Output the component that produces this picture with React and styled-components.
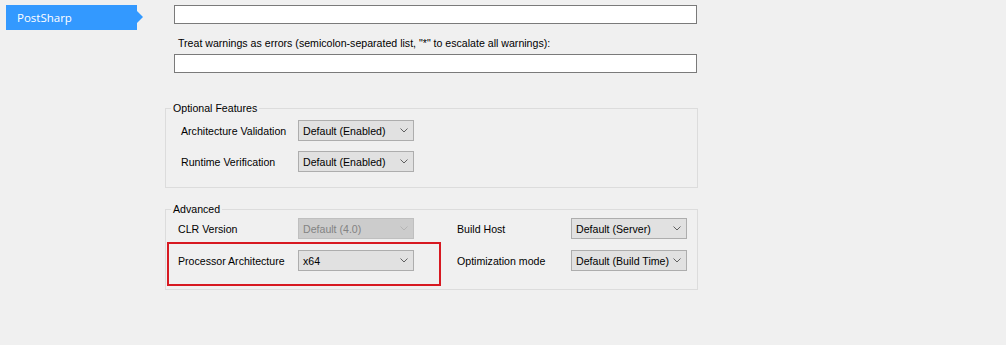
import styled, { createGlobalStyle } from 'styled-components';

const GlobalStyle = createGlobalStyle`
  body {
    margin: 0;
    background: #f0f0f0;
    font-family: "Liberation Sans", Arial, sans-serif;
    font-size: 10.6px;
    color: #000;
  }
`;

const Page = styled.div`
  display: flex;
  width: 1006px;
  height: 345px;
  overflow: hidden;
  background: #f0f0f0;
`;

const Sidebar = styled.div`
  flex-shrink: 0;
  width: 165px;
  box-sizing: border-box;
  padding: 5px 0 0 6px;
`;

const Tab = styled.div`
  position: relative;
  width: 131px;
  height: 25px;
  box-sizing: border-box;
  padding-left: 11px;
  background: #3399ff;
  color: #fff;
  font-family: "Open Sans", "Noto Sans", sans-serif;
  font-size: 11.5px;
  line-height: 25px;

  &::after {
    content: '';
    position: absolute;
    left: 100%;
    top: 6px;
    border-left: 6px solid #3399ff;
    border-top: 6px solid transparent;
    border-bottom: 6px solid transparent;
  }
`;

const Main = styled.div`
  display: flex;
  flex-direction: column;
  width: 533px;
  margin-top: -12px;
`;

const Field = styled.div`
  display: flex;
  flex-direction: column;
  margin-top: ${props => props.$gap || 0}px;

  .label {
    padding-left: 13px;
    line-height: 13px;
    margin-bottom: 4px;
    white-space: nowrap;
  }
`;

const TextBox = styled.div`
  margin-left: 9px;
  width: 523px;
  height: 19px;
  box-sizing: border-box;
  border: 1px solid #7a7a7a;
  background: #fff;
`;

const GroupBox = styled.fieldset`
  margin: ${props => props.$gap}px 0 0;
  width: 533px;
  box-sizing: border-box;
  border: 1px solid #dcdcdc;
  padding: 0;
  min-width: 0;

  legend {
    margin-left: 5px;
    padding: 0 2px;
    line-height: 13px;
  }
`;

const Rows = styled.div`
  display: flex;
  flex-direction: column;
  gap: 10px;
  padding: 5px 0 15px 15px;
`;

const Grid = styled.div`
  display: grid;
  grid-template-columns: 236px 230px;
  column-gap: 43px;
  row-gap: 11px;
  padding: 2px 0 18px 12px;
`;

const Row = styled.div`
  display: grid;
  grid-template-columns: ${props => props.$labelWidth}px 116px;
  align-items: center;
  height: 21px;
  white-space: nowrap;
`;

const Highlight = styled.div`
  margin: -8px -27px -15px -11px;
  padding: 6px 25px 13px 9px;
  border: 2px solid #d71921;
`;

const Combo = styled.div`
  display: flex;
  align-items: center;
  justify-content: space-between;
  height: 21px;
  box-sizing: border-box;
  padding: 0 5px 0 4px;
  border: 1px solid ${props => (props.$disabled ? '#bfbfbf' : '#adadad')};
  background: ${props => (props.$disabled ? '#cccccc' : '#e1e1e1')};
  color: ${props => (props.$disabled ? '#838383' : '#000')};
  overflow: hidden;

  svg {
    flex-shrink: 0;
  }
`;

function Chevron({ color }) {
  return (
    <svg width="8" height="5" viewBox="0 0 8 5">
      <polyline points="0.5,0.5 4,4 7.5,0.5" fill="none" stroke={color} strokeWidth="1" />
    </svg>
  );
}

function Select({ value, disabled }) {
  return (
    <Combo $disabled={disabled}>
      <span>{value}</span>
      <Chevron color={disabled ? '#b4b4b4' : '#606060'} />
    </Combo>
  );
}

function Setting({ label, value, labelWidth, disabled }) {
  return (
    <Row $labelWidth={labelWidth}>
      <span>{label}</span>
      <Select value={value} disabled={disabled} />
    </Row>
  );
}

export default function App() {
  return (
    <Page>
      <GlobalStyle />
      <Sidebar>
        <Tab>PostSharp</Tab>
      </Sidebar>

      <Main>
        <Field>
          <div className="label">Suppress warnings (semicolon-separated list):</div>
          <TextBox />
        </Field>
        <Field $gap={13}>
          <div className="label">Treat warnings as errors (semicolon-separated list, "*" to escalate all warnings):</div>
          <TextBox />
        </Field>

        <GroupBox $gap={29}>
          <legend>Optional Features</legend>
          <Rows>
            <Setting label="Architecture Validation" value="Default (Enabled)" labelWidth={117} />
            <Setting label="Runtime Verification" value="Default (Enabled)" labelWidth={117} />
          </Rows>
        </GroupBox>

        <GroupBox $gap={15}>
          <legend>Advanced</legend>
          <Grid>
            <Setting label="CLR Version" value="Default (4.0)" labelWidth={120} disabled />
            <Setting label="Build Host" value="Default (Server)" labelWidth={114} />
            <Highlight>
              <Setting label="Processor Architecture" value="x64" labelWidth={120} />
            </Highlight>
            <Setting label="Optimization mode" value="Default (Build Time)" labelWidth={114} />
          </Grid>
        </GroupBox>
      </Main>
    </Page>
  );
}
